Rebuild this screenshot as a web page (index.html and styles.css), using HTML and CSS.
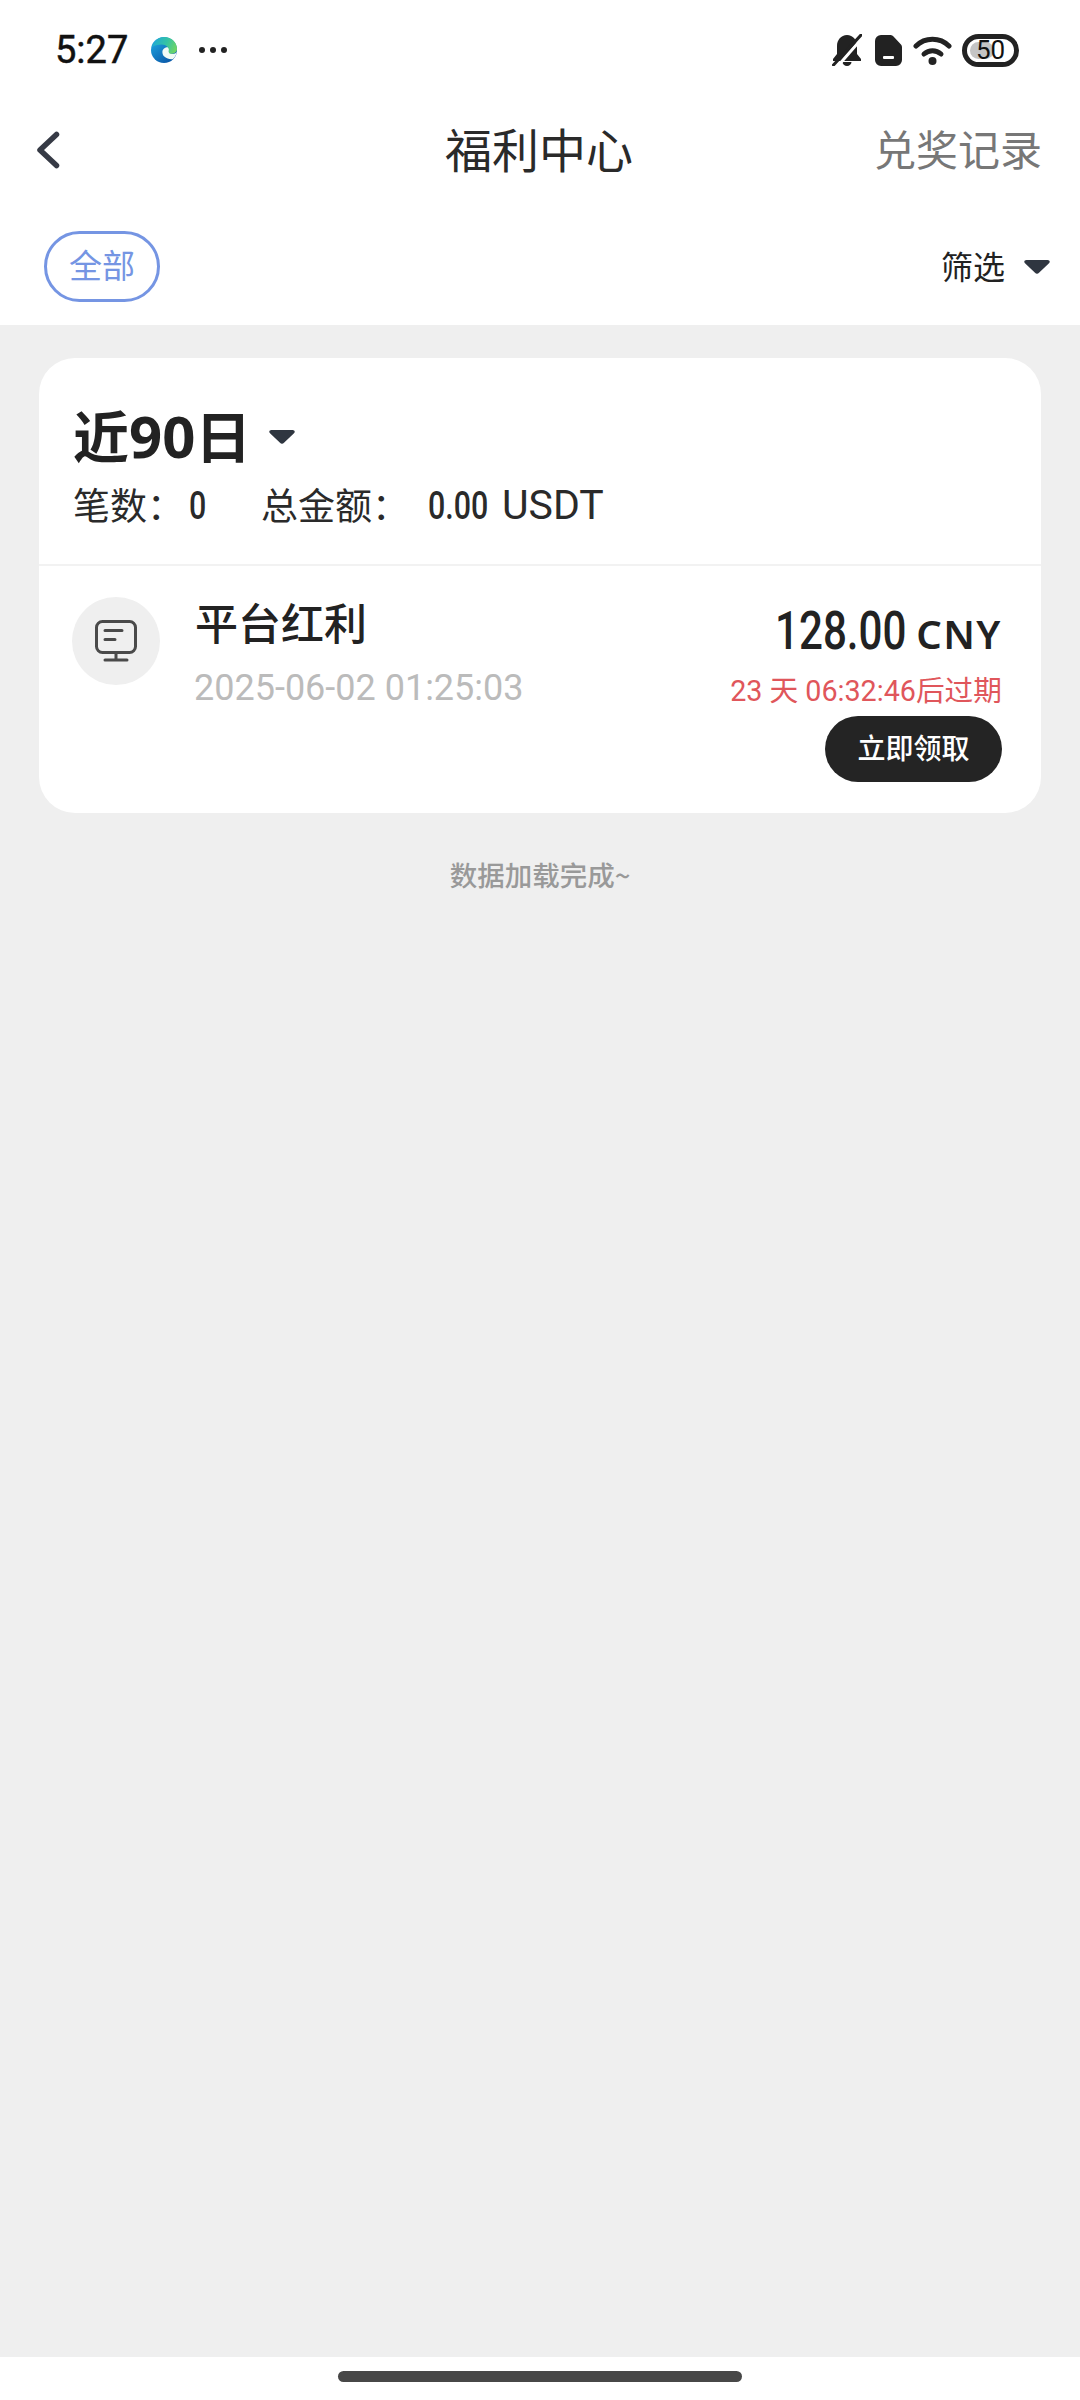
FILE: index.html
```html
<!DOCTYPE html>
<html lang="zh-CN">
<head>
<meta charset="utf-8">
<title>福利中心</title>
<link rel="stylesheet" href="styles.css">
</head>
<body>
<header class="top">
  <div class="status">
    <div class="status-left">
      <span class="time">5:27</span>
      <svg class="edge" viewBox="0 0 24 24">
        <defs>
          <linearGradient id="eb" x1="0" y1="0.2" x2="0.6" y2="1">
            <stop offset="0" stop-color="#1ea3df"/>
            <stop offset="1" stop-color="#0b5cab"/>
          </linearGradient>
          <linearGradient id="eg" x1="0" y1="0.3" x2="1" y2="0.6">
            <stop offset="0" stop-color="#1fa9d6"/>
            <stop offset="0.55" stop-color="#35c3a4"/>
            <stop offset="1" stop-color="#6fd563"/>
          </linearGradient>
        </defs>
        <circle cx="12" cy="12" r="12" fill="url(#eb)"/>
        <path d="M10.500 14c0-3 2.500-4.500 5-4.500 1.500.5 1.300 2 1 3-.5 2 1.500 3 3.500 3 1.500 0 3-.5 4-2-.5 2.500-2 5.500-4 7-3.500 0-9.500-1.500-9.500-6.500z" fill="#f1faf6"/>
        <path d="M.8 9.500C2.500 3.500 7.500 0 12 0c7 0 12 5 12 11 0 3-3 4.500-6 4.500-1 0-2-1-1.500-2.500C17 10 14 7 10 7 6 7 3 8 .8 9.500z" fill="url(#eg)"/>
      </svg>
      <span class="dots"><i></i><i></i><i></i></span>
    </div>
    <div class="status-right">
      <svg class="bell" viewBox="0 0 30 32">
        <path d="M15 1C9 1 5 6 5 12v8l-4 5v2h28v-2l-4-5v-8C25 6 21 1 15 1z" fill="#222"/>
        <path d="M10.500 28a4.500 4 0 0 0 9 0z" fill="#222"/>
        <path d="M32 2 5 33" stroke="#fff" stroke-width="3"/>
        <path d="M29 1 1.500 31" stroke="#222" stroke-width="3" stroke-linecap="round"/>
      </svg>
      <svg class="sim" viewBox="0 0 27 31">
        <path d="M6 0h9c1.500 0 2.500.5 3.500 1.500l7 7.500c1 1 1.500 2 1.500 3.500V25a6 6 0 0 1-6 6H6a6 6 0 0 1-6-6V6a6 6 0 0 1 6-6z" fill="#222"/>
        <rect x="8" y="21" width="11" height="3" rx="1" fill="#fff"/>
      </svg>
      <svg class="wifi" viewBox="0 0 39 30">
        <path d="M3 11C12 2 27 2 36 11" fill="none" stroke="#222" stroke-width="5" stroke-linecap="round"/>
        <path d="M11 19c5-4.500 12-4.500 17 0" fill="none" stroke="#222" stroke-width="5" stroke-linecap="round"/>
        <circle cx="19.500" cy="26" r="4" fill="#222"/>
      </svg>
      <div class="battery"><span class="battery-fill"></span><span class="battery-num">50</span></div>
    </div>
  </div>
  <nav class="nav">
    <div class="nav-left">
      <svg class="back" viewBox="0 0 24 38"><path d="M20.500 3.500 4 19l16.500 15.500" fill="none" stroke="#363a45" stroke-width="5.500" stroke-linecap="round" stroke-linejoin="round"/></svg>
    </div>
    <h1 class="nav-title">福利中心</h1>
    <div class="nav-link">兑奖记录</div>
  </nav>
  <div class="filter">
    <span class="chip">全部</span>
    <span class="filter-btn"><span class="filter-text">筛选</span>
      <svg class="tri" viewBox="0 0 26 14"><path d="M2.500 0h21c2 0 3 1.800 1.500 3.200L15 12.800c-1.200 1.200-2.800 1.200-4 0L1 3.200C-.5 1.800.500 0 2.500 0z"/></svg>
    </span>
  </div>
</header>
<main class="content">
  <section class="card">
    <div class="card-head">
      <div class="period"><span>近<b class="period-num">90</b>日</span>
        <svg class="tri tri-low" viewBox="0 0 26 14"><path d="M2.500 0h21c2 0 3 1.800 1.500 3.200L15 12.800c-1.200 1.200-2.800 1.200-4 0L1 3.200C-.5 1.800.500 0 2.500 0z"/></svg>
      </div>
      <div class="stats">
        <span class="stat-a">笔数：</span><span class="stat-n"><span class="num">0</span></span>
        <span class="stat-b">总金额：</span><span class="stat-m"><span class="num">0.00</span></span><span class="unit">USDT</span>
      </div>
    </div>
    <div class="row">
      <div class="avatar">
        <svg class="monitor" viewBox="0 0 42 42" fill="none" stroke="#4a4a4a" stroke-width="3" stroke-linecap="round">
          <rect x="1.500" y="1.500" width="39" height="31" rx="6"/>
          <path d="M10 10.500h17M10 19.500h10M21 33v7M10 40h22"/>
        </svg>
      </div>
      <div class="info">
        <div class="name">平台红利</div>
        <div class="date">2025-06-02 01:25:03</div>
      </div>
      <div class="side">
        <div class="amount"><span class="amount-n"><span class="num">128.00</span></span><span class="amount-u">CNY</span></div>
        <div class="expire">23 天 06:32:46后过期</div>
        <button class="claim">立即领取</button>
      </div>
    </div>
  </section>
  <p class="done">数据加载完成~</p>
</main>
<footer class="home"><span class="home-bar"></span></footer>
</body>
</html>
```
FILE: styles.css
```css
* { box-sizing: border-box; }
html, body { margin: 0; padding: 0; }
body {
  width: 1080px;
  height: 2400px;
  display: flex;
  flex-direction: column;
  background: #efefef;
  color: #222;
  font-family: "Noto Sans CJK SC", "Noto Sans", sans-serif;
}
.top { background: #fff; height: 325px; flex: none; }
.status {
  height: 100px;
  display: flex;
  justify-content: space-between;
  align-items: center;
  padding: 0 61px 0 55px;
}
.status-left { display: flex; align-items: center; }
.time { font: 400 38px/50px Roboto, sans-serif; -webkit-text-stroke: 0.500px #111; color: #111; width: 96px; }
.edge { width: 26px; height: 26px; }
.dots { display: flex; gap: 5px; margin-left: 22px; }
.dots i { width: 6px; height: 6px; border-radius: 50%; background: #222; }
.status-right { display: flex; align-items: center; }
.bell { width: 30px; height: 32px; }
.sim { width: 27px; height: 31px; margin-left: 13px; }
.wifi { width: 39px; height: 30px; margin-left: 11px; }
.battery {
  position: relative;
  width: 57px;
  height: 33px;
  margin-left: 10px;
  border: 5px solid #222;
  border-radius: 17px;
  display: flex;
  align-items: center;
  justify-content: center;
  overflow: hidden;
}
.battery-fill {
  position: absolute;
  left: 3px;
  top: 3px;
  bottom: 3px;
  width: 24px;
  border-radius: 9px;
  background: #c4c4c4;
}
.battery-num { position: relative; font: 400 26px/24px Roboto, sans-serif; color: #111; }
.nav {
  height: 100px;
  display: grid;
  grid-template-columns: 1fr auto 1fr;
  align-items: center;
  padding: 0 38px 0 36px;
}
.nav-left { display: flex; align-items: center; }
.back { width: 24px; height: 38px; }
.nav-title { margin: 0 0 5px; font-size: 47px; font-weight: 400; line-height: 60px; color: #2a2a2a; }
.nav-link { justify-self: end; margin-bottom: 5px; font-size: 42px; line-height: 60px; color: #777; }
.filter {
  display: flex;
  justify-content: space-between;
  align-items: flex-start;
  padding: 31px 30px 0 44px;
}
.chip {
  width: 116px;
  height: 71px;
  border: 3px solid #7595e3;
  border-radius: 36px;
  color: #7595e3;
  font-size: 33px;
  line-height: 60px;
  text-align: center;
}
.filter-btn {
  display: flex;
  align-items: center;
  gap: 19px;
  height: 71px;
  font-size: 32px;
  color: #222;
}
.filter-text { margin-bottom: 4px; }
.tri { width: 26px; height: 14px; fill: #2f3640; flex: none; }
.tri-low { margin-top: 4px; }
.content { flex: 1; }
.card {
  margin: 33px 39px 0;
  background: #fff;
  border-radius: 36px;
  height: 455px;
  overflow: hidden;
}
.card-head { height: 208px; padding: 47px 34px 0; border-bottom: 2px solid #f2f2f2; }
.period {
  display: flex;
  align-items: center;
  gap: 18px;
  height: 60px;
  font-size: 56px;
  font-weight: 700;
  line-height: 60px;
  color: #222;
}
.period-num { font-family: "Open Sans", sans-serif; font-size: 58px; font-weight: 700; }
.stats {
  display: flex;
  align-items: center;
  height: 44px;
  margin-top: 17px;
  font-size: 37px;
  line-height: 44px;
  color: #2a2a2a;
}
.num {
  display: inline-block;
  font-family: Roboto, sans-serif;
  font-weight: 500;
  transform: scaleX(0.8);
  transform-origin: left center;
}
.stat-a { width: 116px; }
.stat-n { width: 72px; font-size: 38px; }
.stat-b { width: 167px; }
.stat-m { font-size: 38px; width: 74px; }
.unit { margin-top: 2px; font: 400 41px/44px Roboto, sans-serif; }
.row { display: flex; padding: 31px 39px 0 33px; }
.avatar {
  width: 88px;
  height: 88px;
  border-radius: 50%;
  background: #efefef;
  display: flex;
  align-items: center;
  justify-content: center;
  flex: none;
}
.monitor { width: 42px; height: 42px; }
.info { margin-left: 34px; }
.name { margin-top: -3px; margin-left: 1px; font-size: 43px; font-weight: 500; line-height: 54px; color: #222; }
.date { margin-top: 20px; font: 400 36px/40px Roboto, sans-serif; color: #bbb; }
.side { margin-left: auto; display: flex; flex-direction: column; align-items: flex-end; }
.amount { display: flex; align-items: baseline; height: 64px; margin-top: -3px; line-height: 64px; }
.amount-n { width: 129px; font-size: 54px; color: #222; }
.amount-n .num { transform: scaleX(0.78); }
.amount-u { margin-left: 12px; font: 600 40px/64px "Noto Sans", sans-serif; letter-spacing: 1.500px; color: #222; }
.expire { margin-top: 13px; font-size: 28.700px; line-height: 40px; color: #e0565b; font-family: Roboto, "Noto Sans CJK SC", sans-serif; }
.claim {
  margin-top: 5px;
  width: 177px;
  height: 66px;
  border: 0;
  padding: 0 0 4px;
  border-radius: 33px;
  background: #242424;
  color: #fff;
  font-family: "Noto Sans CJK SC", sans-serif;
  font-size: 28px;
  font-weight: 500;
}
.done {
  margin: 41px 0 0;
  text-align: center;
  font-size: 27.500px;
  font-weight: 500;
  line-height: 40px;
  color: #999;
}
.home {
  height: 43px;
  flex: none;
  background: #fff;
  display: flex;
  justify-content: center;
  padding-top: 14px;
}
.home-bar { width: 404px; height: 11px; border-radius: 6px; background: #474747; }
```
